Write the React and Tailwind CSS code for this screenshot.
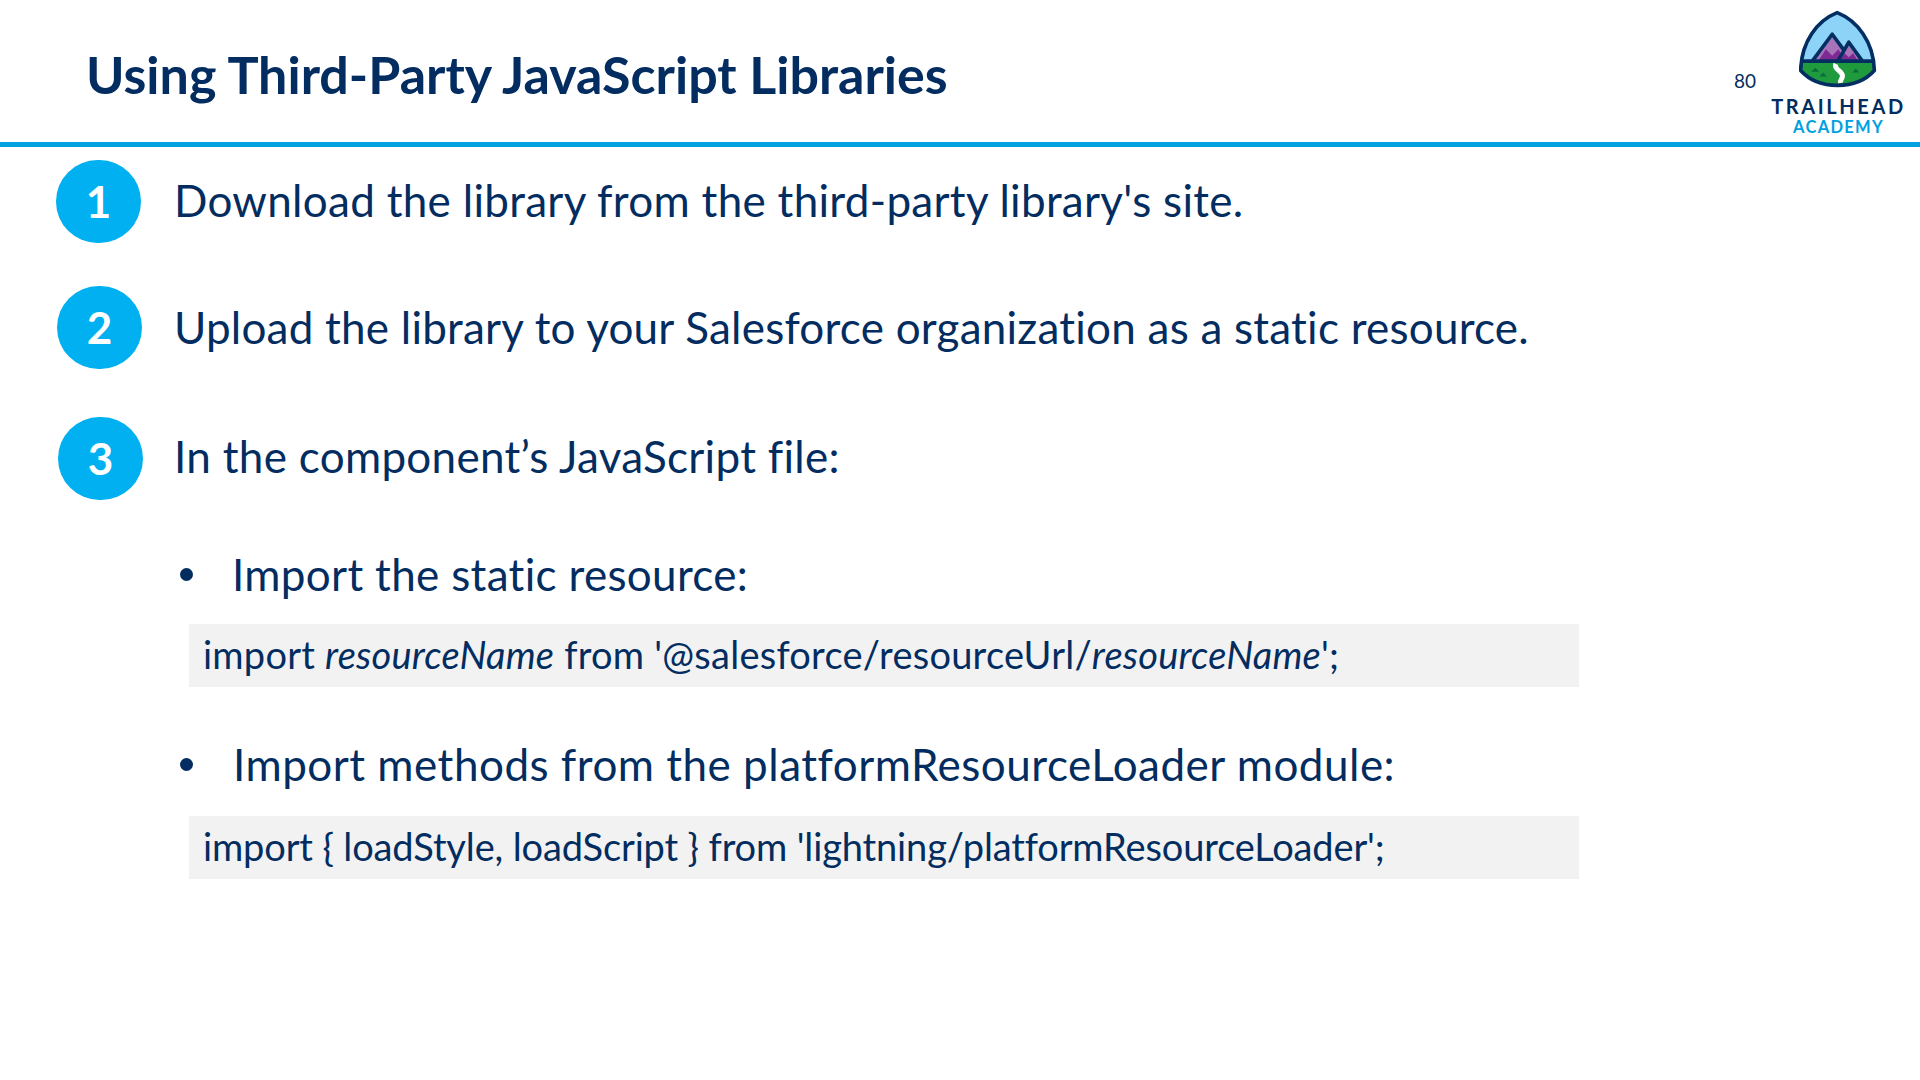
function Logo() {
  const shield = "M470 38C530 62 580 125 582 212C555 242 515 257 471 257C427 257 387 242 360 212C362 125 410 62 470 38Z";
  return (
    <svg viewBox="355 30 235 235" className="mr-[2px] block h-[78px] w-[78px]" aria-hidden="true">
      <defs>
        <clipPath id="shield">
          <path d={shield} />
        </clipPath>
      </defs>
      <path d={shield} fill="#8dd3f8" />
      <g clipPath="url(#shield)">
        <rect x="350" y="184" width="240" height="80" fill="#1f9b3d" />
        <path d="M455 112L400 182H510Z" fill="#a873b8" />
        <path d="M505 135L475 182H540Z" fill="#a873b8" />
        <path d="M436 148L455 168L474 148L492 182H414Z" fill="#7d2a92" />
        <path d="M492 160L505 172L518 160L532 182H480Z" fill="#7d2a92" />
        <path d="M404 204L416 216H392Z" fill="#0b6b3a" />
        <path d="M428 218L438 230H416Z" fill="#0b6b3a" />
        <path d="M526 206L536 218H516Z" fill="#0b6b3a" />
      </g>
      <path d="M395 184L455 103L488 148M472 184L505 127L546 184" fill="none" stroke="#032e61" strokeWidth="11" strokeLinejoin="round" />
      <path d="M362 184H580" stroke="#032e61" strokeWidth="11" />
      <path d="M466 192C458 208 486 214 486 228C486 238 478 240 480 250" fill="none" stroke="#ffffff" strokeWidth="15" />
      <path d={shield} fill="none" stroke="#032e61" strokeWidth="11" strokeLinejoin="round" />
    </svg>
  );
}

function Step({ n, ml, top, textClass, children }) {
  return (
    <div className={`flex h-[83px] items-center ${top}`}>
      <div className="w-[174px] shrink-0">
        <div className={`flex h-[83px] w-[85px] items-center justify-center rounded-full bg-[#00b0f0] pb-[2px] text-[44px] font-bold text-white ${ml}`}>
          {n}
        </div>
      </div>
      <div className={`text-[44px] ${textClass}`}>{children}</div>
    </div>
  );
}

function Bullet({ textClass, children }) {
  return (
    <div className="flex h-[60px] items-center text-[44px]">
      <span className="ml-[180px] h-[13px] w-[13px] shrink-0 rounded-full bg-[#032d60]" />
      <span className={textClass}>{children}</span>
    </div>
  );
}

function Code({ children, textClass, top }) {
  return (
    <div className={`ml-[189px] flex h-[63px] w-[1390px] items-center bg-[#f2f2f2] pb-[2px] pl-[14px] text-[38px] ${top}`}>
      <span className={textClass}>{children}</span>
    </div>
  );
}

export default function App() {
  return (
    <div className="relative h-[1080px] w-[1920px] overflow-hidden bg-white font-['Lato',sans-serif] text-[#032d60]">
      <header className="flex h-[147px] items-start border-b-[5px] border-[#00a1e0]">
        <h1 className="ml-[86px] mt-[41px] text-[52px] font-bold leading-[66px]">Using Third-Party JavaScript Libraries</h1>
        <div className="ml-auto mr-[164px] mt-[71px] text-[19px] leading-[20px]">80</div>
        <div className="absolute right-[16px] top-[10px] flex w-[131px] flex-col items-center">
          <Logo />
          <div className="mt-[9px] whitespace-nowrap text-[20px] font-bold leading-[18px] tracking-[2.6px]">TRAILHEAD</div>
          <div className="mt-[4px] whitespace-nowrap text-[16.5px] font-bold leading-[16px] tracking-[1.3px] text-[#00a1e0]">ACADEMY</div>
        </div>
      </header>
      <main>
        <Step n="1" ml="ml-[56px]" top="mt-[13px]" textClass="-mt-[4px] tracking-[0.3px]">Download the library from the third-party library's site.</Step>
        <Step n="2" ml="ml-[57px]" top="mt-[43px]" textClass="-mt-[1px] tracking-[0.23px]">Upload the library to your Salesforce organization as a static resource.</Step>
        <Step n="3" ml="ml-[58px]" top="mt-[48px]" textClass="-mt-[5px] tracking-[0.3px]">In the component’s JavaScript file:</Step>
        <div className="mt-[44px]">
          <Bullet textClass="ml-[39px] tracking-[0.32px]">Import the static resource:</Bullet>
        </div>
        <Code top="mt-[20px]" textClass="tracking-[0.24px]">import <em>resourceName</em> from '@salesforce/resourceUrl/<em>resourceName</em>';</Code>
        <div className="mt-[47px]">
          <Bullet textClass="ml-[40px] tracking-[0.5px]">Import methods from the platformResourceLoader module:</Bullet>
        </div>
        <Code top="mt-[22px]" textClass="-tracking-[0.14px]">import {"{"} loadStyle, loadScript {"}"} from 'lightning/platformResourceLoader';</Code>
      </main>
    </div>
  );
}
